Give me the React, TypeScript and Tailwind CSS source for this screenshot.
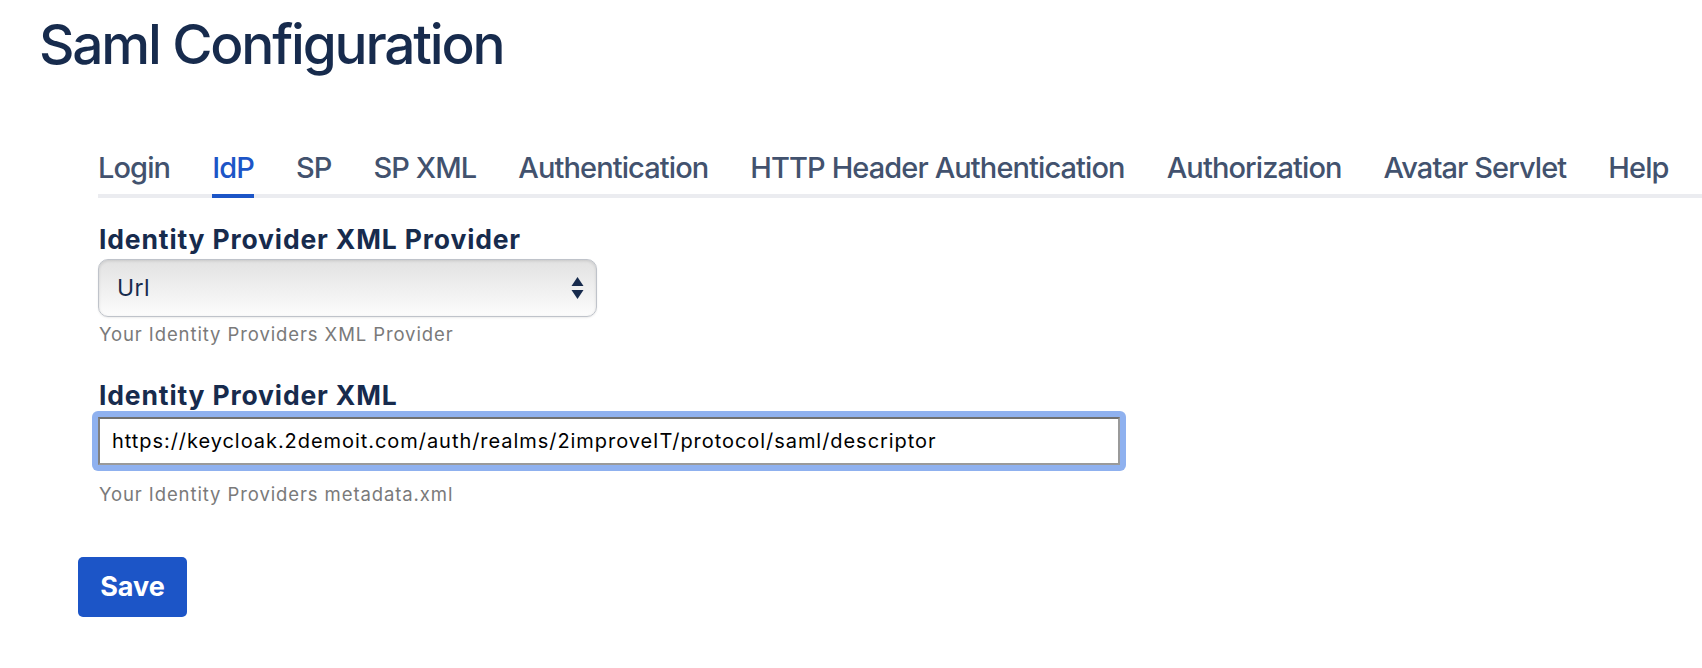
import React from "react";

const tabs = [
  "Login",
  "IdP",
  "SP",
  "SP XML",
  "Authentication",
  "HTTP Header Authentication",
  "Authorization",
  "Avatar Servlet",
  "Help",
];

export default function App() {
  return (
    <div
      className="min-h-[668px] w-full bg-white"
      style={{ fontFamily: "Inter, 'Noto Sans', sans-serif" }}
    >
      <div className="flex flex-col">
        <h1 className="ml-[39px] mt-[14px] text-[55px] leading-[60px] font-medium tracking-[-2.2px] text-[#172b4d]">
          Saml Configuration
        </h1>

        <div className="ml-[98px] mt-[76px] flex items-end gap-[42px] border-b-4 border-[#ebecf0]">
          {tabs.map((t) => (
            <div
              key={t}
              className={
                t === "IdP"
                  ? "-mb-1 shrink-0 whitespace-nowrap border-b-4 border-[#1c55c7] pb-2 text-[29px] leading-[36px] font-medium tracking-[-0.9px] text-[#1c55c7]"
                  : "-mb-1 shrink-0 whitespace-nowrap border-b-4 border-transparent pb-2 text-[29px] leading-[36px] font-medium tracking-[-0.9px] text-[#42526e]"
              }
            >
              {t}
            </div>
          ))}
        </div>

        <div className="ml-[98px] mt-[26px] flex flex-col">
          <label className="pl-[1px] text-[26.5px] leading-[30px] font-bold tracking-[0.85px] text-[#172b4d]">
            Identity Provider XML Provider
          </label>
          <div className="mt-[5px] flex h-[58px] w-[499px] items-center justify-between rounded-[10px] border-[1.5px] border-[#bfc3ca] bg-gradient-to-b from-[#e2e2e2] to-[#fcfcfc] pl-[18px] pr-[12px] shadow-[inset_0_1px_3px_rgba(0,0,0,0.12),0_1px_2px_rgba(0,0,0,0.08)]">
            <span className="text-[23px] leading-[28px] tracking-[0.4px] text-[#172b4d]">Url</span>
            <svg width="13" height="24" viewBox="0 0 13 24">
              <polygon points="6.5,1 12.5,10 0.5,10" fill="#172b4d" />
              <polygon points="0.5,14 12.5,14 6.5,23" fill="#172b4d" />
            </svg>
          </div>
          <p className="mt-[6px] pl-[1px] text-[18.5px] leading-[22px] tracking-[0.9px] text-[#7a7a7a]">
            Your Identity Providers XML Provider
          </p>

          <label className="mt-[35px] pl-[1px] text-[26.5px] leading-[30px] font-bold tracking-[0.85px] text-[#172b4d]">
            Identity Provider XML
          </label>
          <div className="-ml-[6px] mt-[1px] w-[1034px] rounded-[6px] bg-[#8fb1ef] p-[6px]">
            <input
              readOnly
              value="https://keycloak.2demoit.com/auth/realms/2improveIT/protocol/saml/descriptor"
              className="block h-[48px] w-full border-2 border-[#9a9a9a] border-t-[#707070] border-l-[#808080] bg-white px-[12px] text-[20px] tracking-[0.95px] text-black outline-none"
              style={{ fontFamily: "Inter, 'Noto Sans', sans-serif" }}
            />
          </div>
          <p className="mt-[12px] pl-[1px] text-[18.5px] leading-[22px] tracking-[0.9px] text-[#7a7a7a]">
            Your Identity Providers metadata.xml
          </p>
        </div>

        <div className="ml-[78px] mt-[52px]">
          <button className="flex h-[60px] w-[109px] items-center justify-center rounded-[5px] bg-[#1c55c7] text-[27px] font-bold text-white">
            Save
          </button>
        </div>
      </div>
    </div>
  );
}
